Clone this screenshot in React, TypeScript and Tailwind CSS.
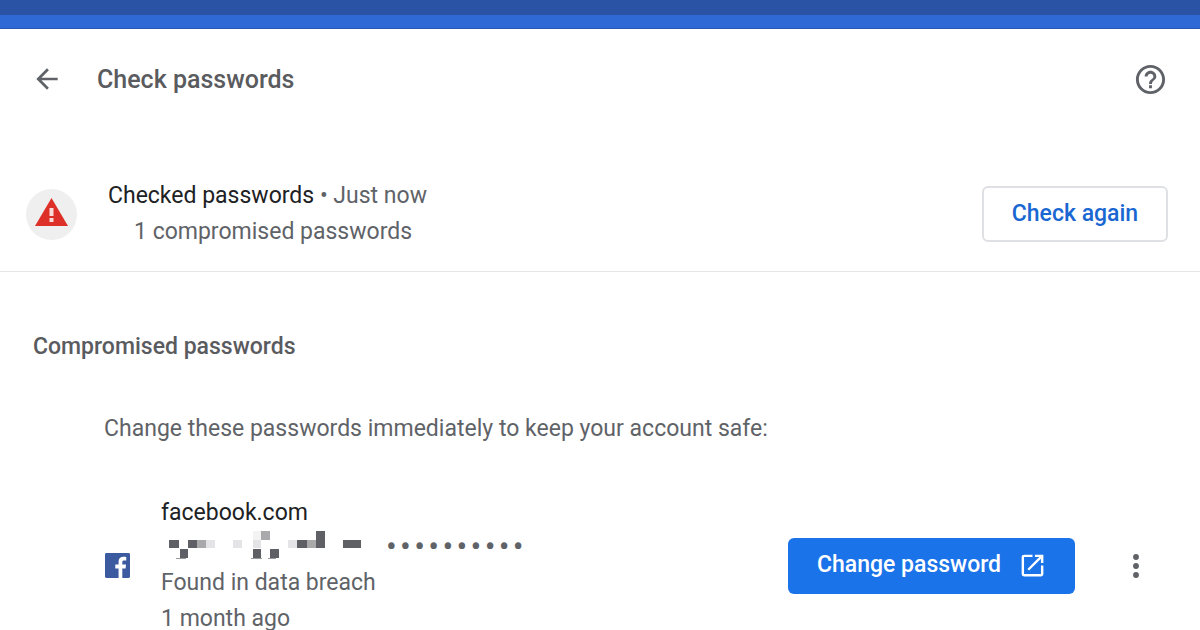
import React from "react";

const font = { fontFamily: "Roboto, sans-serif" };

function Mosaic() {
  const d = "#5f6065";
  const g = "#a9a9ac";
  const l = "#e4e4e6";
  const rects: [number, number, number, number, string][] = [
    [9, 12, 10, 8, d],
    [20, 21, 8, 9, d],
    [16, 30, 10, 1, "#9a9a9d"],
    [28, 12, 9, 8, d],
    [37, 12, 9, 8, g],
    [46, 12, 9, 8, l],
    [73, 12, 9, 8, l],
    [93, 3, 8, 9, "#f3f3f4"],
    [93, 12, 8, 8, l],
    [101, 3, 9, 9, g],
    [93, 21, 8, 9, d],
    [91, 30, 11, 1, "#9a9a9d"],
    [110, 21, 9, 9, d],
    [108, 30, 8, 1, "#9a9a9d"],
    [128, 12, 9, 8, l],
    [137, 12, 10, 8, d],
    [147, 12, 9, 8, g],
    [156, 3, 9, 17, d],
    [183, 12, 18, 8, d],
  ];
  return (
    <svg width="204" height="32" viewBox="0 0 204 32" className="shrink-0 -mt-[4px]">
      {rects.map(([x, y, w, h, c], i) => (
        <rect key={i} x={x} y={y} width={w} height={h} fill={c} />
      ))}
    </svg>
  );
}

export default function App() {
  return (
    <div className="w-[1200px] h-[630px] overflow-hidden bg-white flex flex-col" style={font}>
      <div className="h-[15px] shrink-0 bg-[#2a52a5]" />
      <div className="h-[14px] shrink-0 bg-[#2f69d6] border-b border-[#2a58b0]" />

      <div className="h-[100px] shrink-0 flex items-center pl-[31px] pr-[32px]">
        <svg width="32" height="32" viewBox="0 0 24 24" className="shrink-0 text-[#5f6368]" fill="currentColor">
          <path d="M20 11H7.83l5.59-5.59L12 4l-8 8 8 8 1.41-1.41L7.83 13H20v-2z" />
        </svg>
        <div className="ml-[34px] text-[25px] font-medium text-[#5a5b5e] leading-none">Check passwords</div>
        <svg width="35" height="35" viewBox="0 0 24 24" className="ml-auto shrink-0 text-[#5f6368]" fill="currentColor">
          <path d="M11 18h2v-2h-2v2zm1-16C6.48 2 2 6.48 2 12s4.48 10 10 10 10-4.48 10-10S17.52 2 12 2zm0 18c-4.41 0-8-3.59-8-8s3.59-8 8-8 8 3.59 8 8-3.59 8-8 8zm0-14c-2.21 0-4 1.79-4 4h2c0-1.1.9-2 2-2s2 .9 2 2c0 2-3 1.75-3 5h2c0-2.25 3-2.5 3-5 0-2.21-1.79-4-4-4z" />
        </svg>
      </div>

      <div className="h-[143px] shrink-0 flex items-center pt-[28px] pl-[26px] pr-[32px] border-b border-[#e6e6e8]">
        <div className="w-[51px] h-[51px] rounded-full bg-[#efefef] shrink-0 flex items-center justify-center">
          <svg width="33" height="28" viewBox="0 0 33 28" className="-mt-[5px]">
            <path d="M16.5 0 L33 28 H0 Z" fill="#dc3028" />
            <rect x="14.5" y="10" width="4" height="8" fill="#f7dcda" />
            <rect x="14.5" y="20" width="4" height="4" fill="#f7dcda" />
          </svg>
        </div>
        <div className="ml-[31px] flex flex-col text-[23px] leading-[36px] text-[#5f6368]">
          <div>
            <span className="text-[#202124]">Checked passwords</span> • Just now
          </div>
          <div className="pl-[26px]">1 compromised passwords</div>
        </div>
        <button className="ml-auto w-[186px] h-[56px] rounded-[6px] border-2 border-[#dfe0e3] bg-white text-[23px] font-medium text-[#1a67d2]">
          Check again
        </button>
      </div>

      <div className="mt-[60px] pl-[33px] text-[23px] font-medium leading-[30px] text-[#5a5b5e]">Compromised passwords</div>

      <div className="mt-[52px] pl-[104px] text-[23.03px] leading-[30px] text-[#5f6368]">
        Change these passwords immediately to keep your account safe:
      </div>

      <div className="mt-[50px] shrink-0 flex items-center pl-[105px] pr-[48px]">
        <svg width="25" height="25" viewBox="0 0 26 26" className="shrink-0">
          <rect width="26" height="26" rx="1.5" fill="#3b5a9f" />
          <path d="M18 26V16h3.4l.5-4H18V9.6c0-1.2.4-1.9 2-1.9h2.1V4.2c-.4 0-1.6-.2-3-.2-3 0-5 1.8-5 5.2V12h-3.4v4h3.4v10z" fill="#ffffff" />
        </svg>
        <div className="ml-[31px] flex flex-col text-[23px] leading-[36px] text-[#5f6368]">
          <div className="text-[#202124] leading-[38px]">facebook.com</div>
          <div className="-ml-[1px] h-[33px] flex items-start">
            <Mosaic />
            <span className="ml-[22px] -mt-[2px] tracking-[3.3px] text-[32px] leading-[32px] text-[#5f6368]">••••••••••</span>
          </div>
          <div>Found in data breach</div>
          <div>1 month ago</div>
        </div>
        <button className="ml-auto w-[287px] h-[56px] rounded-[6px] bg-[#1a73e8] flex items-center pl-[29px] text-[23px] font-medium text-white">
          Change password
          <svg width="29" height="29" viewBox="0 0 24 24" fill="currentColor" className="ml-[17px] shrink-0">
            <path d="M19 19H5V5h7V3H5a2 2 0 0 0-2 2v14a2 2 0 0 0 2 2h14c1.1 0 2-.9 2-2v-7h-2v7zM14 3v2h3.59l-9.83 9.83 1.41 1.41L19 6.41V10h2V3h-7z" />
          </svg>
        </button>
        <svg width="32" height="32" viewBox="0 0 24 24" fill="#5f6368" className="ml-[45px] shrink-0">
          <circle cx="12" cy="5.25" r="2.2" />
          <circle cx="12" cy="12" r="2.2" />
          <circle cx="12" cy="18.75" r="2.2" />
        </svg>
      </div>
    </div>
  );
}
